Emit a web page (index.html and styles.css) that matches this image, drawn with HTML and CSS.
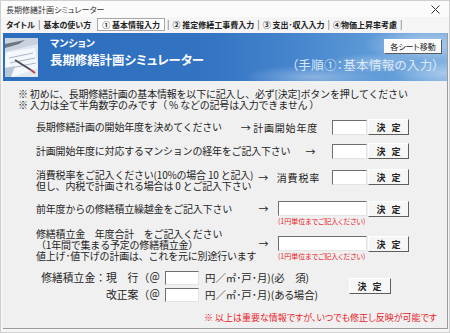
FILE: index.html
```html
<!DOCTYPE html>
<html lang="ja">
<head>
<meta charset="utf-8">
<title>長期修繕計画シミュレーター</title>
<link rel="stylesheet" href="styles.css">
</head>
<body>
<div class="window">
  <div class="titlebar">
    <span class="wtitle">長期修繕計画シミュレーター</span>
    <svg class="close" width="9" height="9" viewBox="0 0 9 9"><path d="M0.5 0.5 L8.5 8.5 M8.5 0.5 L0.5 8.5" stroke="#333" stroke-width="1" fill="none"/></svg>
  </div>
  <div class="tabs">
    <span class="tab">タイトル</span><span class="sep">|</span>
    <span class="tab">基本の使い方</span>
    <span class="tab active">① 基本情報入力</span><span class="sep">|</span>
    <span class="tab">② 推定修繕工事費入力</span><span class="sep">|</span>
    <span class="tab">③ 支出･収入入力</span><span class="sep">|</span>
    <span class="tab">④物価上昇率考慮</span><span class="sep">|</span>
  </div>
  <div class="panel">
    <div class="banner">
      <svg class="thumb" width="33" height="39" viewBox="0 0 33 39">
        <rect width="33" height="39" fill="#dfe7f1"/>
        <polygon points="0,0 33,0 33,6 0,14" fill="#c9d3df"/>
        <polygon points="0,6 20,2 14,6 0,10" fill="#6d7480"/>
        <polygon points="2,14 30,10 33,30 8,39 0,39 0,18" fill="#f4f7fb"/>
        <path d="M4 20 L28 15 M5 25 L30 20 M6 30 L31 25" stroke="#a9b6c6" stroke-width="1"/>
        <path d="M10 22 L26 32" stroke="#4a4f58" stroke-width="2"/>
        <path d="M26 32 L30 35" stroke="#b84040" stroke-width="2"/>
        <polygon points="0,30 10,28 6,39 0,39" fill="#b9c6d6"/>
      </svg>
      <div class="btitle">
        <div class="sub">マンション</div>
        <div class="main">長期修繕計画シミュレーター</div>
      </div>
      <div class="bright">
        <div class="sheetbtn">各シート移動</div>
        <div class="step">（手順①：基本情報の入力）</div>
      </div>
    </div>
    <div class="content">
      <div class="notes">
        <p>※ 初めに、長期修繕計画の基本情報を以下に記入し、必ず[決定]ボタンを押してください</p>
        <p>※ 入力は全て半角数字のみです（ % などの記号は入力できません ）</p>
      </div>

      <div class="row r1">
        <div class="label">長期修繕計画の開始年度を決めてください</div>
        <div class="rhs">
          <span class="arrow">→</span><span class="rl">計画開始年度</span>
          <span class="inp"></span><span class="btn">決 定</span>
        </div>
      </div>

      <div class="row r2">
        <div class="label">計画開始年度に対応するマンションの経年をご記入下さい</div>
        <div class="rhs">
          <span class="arrow">→</span>
          <span class="inp"></span><span class="btn">決 定</span>
        </div>
      </div>

      <div class="row r3">
        <div class="label two">消費税率をご記入ください(10%の場合 10 と記入)<br>但し、内税で計画される場合は 0 とご記入下さい</div>
        <div class="rhs">
          <span class="arrow">→</span><span class="rl">消費税率</span>
          <span class="inp"></span><span class="btn">決 定</span>
        </div>
      </div>

      <div class="row r4">
        <div class="label">前年度からの修繕積立繰越金をご記入下さい</div>
        <div class="rhs">
          <span class="arrow">→</span>
          <span class="col"><span class="inp wide"></span><span class="rnote">(1円単位までご記入ください)</span></span>
          <span class="btn">決 定</span>
        </div>
      </div>

      <div class="row r5">
        <div class="label three">修繕積立金　年度合計　をご記入ください<br>（1年間で集まる予定の修繕積立金）<br>値上げ･値下げの計画は、これを元に別途行います</div>
        <div class="rhs">
          <span class="arrow">→</span>
          <span class="col"><span class="inp wide"></span><span class="rnote">(1円単位までご記入ください)</span></span>
          <span class="btn">決 定</span>
        </div>
      </div>

      <div class="fee">
        <div class="flabel">修繕積立金：現　行（＠</div>
        <span class="inp small"></span>
        <div class="ftext">円／㎡･戸･月)(必　須)</div>
        <span class="btn fbtn">決 定</span>
        <div class="flabel">改正案（＠</div>
        <span class="inp small"></span>
        <div class="ftext">円／㎡･戸･月)(ある場合)</div>
      </div>

      <div class="footnote">※ 以上は重要な情報ですが、いつでも修正し反映が可能です</div>
    </div>
  </div>
</div>
</body>
</html>
```

FILE: styles.css
```css
* { box-sizing: border-box; }
html, body { margin: 0; padding: 0; }
body {
  width: 450px;
  height: 333px;
  overflow: hidden;
  background: #f3f3f3;
  font-family: "Noto Sans CJK JP", "Noto Sans", sans-serif;
  color: #1e1e1e;
  font-feature-settings: "palt";
}
.window {
  width: 450px;
  height: 333px;
  display: flex;
  flex-direction: column;
  background: #f5f5f5;
  border: 1px solid #cfcfcf;
}
.titlebar {
  height: 16px;
  display: flex;
  align-items: center;
  justify-content: space-between;
  padding: 0 9px 0 5px;
  font-size: 8px;
  color: #333;
  background: #fbfbfb;
}
.close { display: block; }
.tabs {
  height: 15px;
  display: flex;
  align-items: center;
  padding-left: 4px;
  font-size: 8px;
  font-weight: bold;
  color: #222;
  white-space: nowrap;
}
.tab { padding: 0 1px; }
.sep { margin: 0 2px; font-weight: normal; color: #555; font-size: 9px; }
.tab.active {
  margin-left: 5px;
  height: 13px;
  line-height: 12px;
  padding: 0 4px;
  border: 1px solid #a8a8a8;
  background: #fdfdfd;
}
.panel {
  flex: 1;
  margin: 1px 1px 3px 2px;
  display: flex;
  flex-direction: column;
  background: #f0f0f0;
  border-right: 1px solid #9c9c9c;
  border-bottom: 1px solid #9c9c9c;
}
.banner {
  height: 48px;
  display: flex;
  background:
    radial-gradient(ellipse 70px 12px at 310px 44px, rgba(255,255,255,.35), rgba(255,255,255,0)),
    radial-gradient(ellipse 60px 18px at 420px 12px, rgba(255,255,255,.45), rgba(255,255,255,0)),
    radial-gradient(ellipse 45px 10px at 370px 30px, rgba(255,255,255,.3), rgba(255,255,255,0)),
    radial-gradient(ellipse 50px 14px at 440px 40px, rgba(255,255,255,.35), rgba(255,255,255,0)),
    linear-gradient(90deg, #2d6dbd 0%, #3273c2 45%, #4585cd 65%, #5f9bd8 85%, #78acdf 100%);
}
.thumb { display: block; margin: 5px 0 0 2px; flex: none; }
.btitle { margin-left: 12px; padding-top: 4px; color: #fff; white-space: nowrap; }
.sub { font-size: 10px; font-weight: bold; line-height: 12px; }
.main { font-size: 12.4px; font-weight: bold; line-height: 16px; margin-top: 3px; }
.bright {
  margin-left: auto;
  display: flex;
  flex-direction: column;
  align-items: flex-end;
  padding: 6px 5px 0 0;
}
.sheetbtn {
  width: 58px;
  height: 15px;
  font-size: 8px;
  line-height: 13px;
  text-align: center;
  color: #222;
  background: #fafafa;
  border: 1px solid;
  border-color: #fff #5a5a5a #5a5a5a #fff;
}
.step {
  margin-top: 4px;
  margin-right: 3px;
  font-size: 12.5px;
  line-height: 14px;
  color: #dce8f6;
  letter-spacing: 0.3px;
  white-space: nowrap;
}
.content {
  display: flex;
  flex-direction: column;
  padding: 7px 38px 0 0;
  font-size: 10px;
}
.notes, .label {
  font-feature-settings: normal;
  letter-spacing: -0.2px;
}
.notes { padding-left: 15px; }
.notes p { margin: 0; line-height: 11px; white-space: nowrap; }
.row {
  display: flex;
  align-items: flex-start;
  padding-left: 33px;
}
.label { line-height: 16px; white-space: nowrap; }
.label.two, .label.three { line-height: 11px; }
.rhs {
  margin-left: auto;
  display: flex;
  align-items: center;
  white-space: nowrap;
  flex: none;
}
.arrow { width: 11px; line-height: 15px; text-align: center; }
.rl { line-height: 15px; letter-spacing: 0.8px; }
.inp {
  display: block;
  width: 35px;
  height: 15px;
  background: #fff;
  border-top: 1px solid #6e6e6e;
  border-left: 1px solid #6e6e6e;
  border-right: 1px solid #e4e4e4;
  border-bottom: 1px solid #e4e4e4;
}
.inp.wide { width: 89px; }
.inp.small { width: 34px; height: 14px; }
.btn {
  display: flex;
  align-items: center;
  justify-content: center;
  width: 41px;
  height: 16px;
  margin-left: 1px;
  font-size: 9px;
  font-weight: bold;
  letter-spacing: 2px;
  padding-left: 2px;
  color: #222;
  background: #f6f6f6;
  border: 1px solid;
  border-color: #fff #5e5e5e #5e5e5e #fff;
}
.r1 { margin-top: 9px; }
.r1 .arrow { margin-right: 2px; }
.r1 .rl { margin: 0 14px 0 0; }
.r2 { margin-top: 8px; }
.r2 .arrow { margin-right: 16px; }
.r3 { margin-top: 10px; }
.r3 .arrow { margin-right: 8px; }
.r3 .rl { margin-right: 12px; }
.r4 { margin-top: 10px; }
.r4 .rhs, .r5 .rhs { align-items: flex-start; }
.r4 .arrow, .r5 .arrow { margin-right: 9px; }
.r5 { margin-top: 3px; }
.r5 .rhs { margin-top: 8px; }
.col { display: flex; flex-direction: column; }
.rnote {
  font-size: 7px;
  line-height: 8px;
  margin-top: 1px;
  color: #e8242a;
  white-space: nowrap;
}
.fee {
  margin-top: 9px;
  padding-left: 33px;
  display: grid;
  grid-template-columns: 124px 34px auto auto;
  grid-template-rows: 15px 15px;
  row-gap: 2px;
  align-items: center;
  font-size: 10.8px;
}
.flabel { text-align: right; line-height: 15px; white-space: nowrap; font-feature-settings: normal; }
.fee .inp { margin-left: 5px; }
.ftext { margin-left: 11px; line-height: 15px; white-space: nowrap; font-size: 10.4px; }
.fbtn {
  grid-column: 4;
  grid-row: 1 / span 2;
  margin-left: 12px;
  width: 42px;
  font-size: 9px;
}
.footnote {
  margin-top: 10px;
  align-self: flex-end;
  margin-right: -28px;
  font-size: 9px;
  line-height: 11px;
  color: #e8242a;
  white-space: nowrap;
}
```
